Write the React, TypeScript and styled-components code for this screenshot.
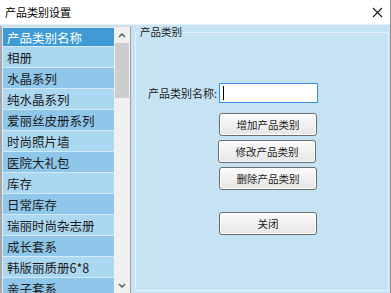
import React from "react";
import styled, { createGlobalStyle } from "styled-components";

const GlobalStyle = createGlobalStyle`
  html, body {
    margin: 0;
    padding: 0;
    background: #c6e3f4;
    font-family: "Noto Sans CJK SC", "Liberation Sans", sans-serif;
  }
`;

const Window = styled.div`
  width: 391px;
  height: 293px;
  display: flex;
  flex-direction: column;
  background: #c6e3f4;
  overflow: hidden;
  border-right: 1px solid #8d8d8d;
  box-sizing: border-box;
`;

const TitleBar = styled.div`
  height: 24px;
  flex: none;
  background: #ffffff;
  display: flex;
  align-items: center;
  justify-content: space-between;
  padding: 0 7px 0 5px;
  font-size: 11px;
  color: #000;
`;

const Body = styled.div`
  flex: 1;
  display: flex;
  min-height: 0;
  border-top: 1px solid #e6f3fb;
`;

const ListFrame = styled.div`
  width: 128px;
  flex: none;
  margin-top: 1px;
  display: flex;
  border-left: 2px solid #a9a9a9;
  border-top: 1px solid #d9d9d9;
  border-right: 1px solid #a0a0a0;
  background: #f0f0f0;
  overflow: hidden;
`;

const Rows = styled.div`
  flex: 1;
  display: flex;
  flex-direction: column;
  padding: 1px 0 0 1px;
  background: #d7ecf8;
`;

const Row = styled.div<{ $kind: "head" | "odd" | "even" }>`
  height: ${(p) => (p.$kind === "head" ? "18px" : "20px")};
  flex: none;
  display: flex;
  align-items: center;
  padding-left: 4px;
  font-size: 12.5px;
  white-space: nowrap;
  border-bottom: 1px solid #d2e9f7;
  color: ${(p) => (p.$kind === "head" ? "#ffffff" : "#1a1a1a")};
  background: ${(p) =>
    p.$kind === "head" ? "#3f9bd5" : p.$kind === "odd" ? "#acd7f1" : "#8fc7ea"};
`;

const ScrollBar = styled.div`
  width: 16px;
  flex: none;
  display: flex;
  flex-direction: column;
  align-items: center;
  background: #f0f0f0;
`;

const Arrow = styled.div`
  height: 16px;
  display: flex;
  align-items: center;
  justify-content: center;
`;

const Thumb = styled.div`
  width: 14px;
  height: 55px;
  background: #cdcdcd;
`;

const Track = styled.div`
  flex: 1;
`;

const Panel = styled.div`
  flex: 1;
  padding: 1px 1px 2px 4px;
  display: flex;
`;

const GroupBox = styled.fieldset`
  flex: 1;
  margin: 0;
  padding: 0;
  border: 1px solid #e3f1fb;
  border-radius: 2px;
  display: flex;
  flex-direction: column;
  align-items: flex-start;
`;

const Legend = styled.legend`
  font-size: 10.5px;
  color: #1a1a1a;
  padding: 0 1px;
  margin-left: 3px;
  line-height: 12px;
`;

const FieldRow = styled.div`
  display: flex;
  align-items: center;
  margin: 45px 0 0 12px;
  gap: 2px;
`;

const Label = styled.span`
  font-size: 11px;
  color: #1a1a1a;
`;

const Input = styled.div`
  width: 94px;
  height: 18px;
  background: #ffffff;
  border: 1px solid #3c8fd9;
  display: flex;
  align-items: center;
  padding-left: 3px;
  box-sizing: content-box;
`;

const Caret = styled.div`
  width: 1px;
  height: 14px;
  background: #000;
`;

const Buttons = styled.div`
  display: flex;
  flex-direction: column;
  margin: 10px 0 0 83px;
`;

const Button = styled.button<{ $gap?: number; $shift?: number }>`
  width: 98px;
  height: 23px;
  margin-top: ${(p) => p.$gap ?? 0}px;
  margin-left: ${(p) => p.$shift ?? 0}px;
  border: 1px solid #6c6c6c;
  border-radius: 3px;
  background: linear-gradient(#fbfbfb, #e6e6e6);
  font-family: "Noto Sans CJK SC", "Liberation Sans", sans-serif;
  font-size: 10.5px;
  color: #1a1a1a;
  padding: 0;
  box-shadow: inset 0 0 0 1px #ffffff;
`;

const items = [
  "相册",
  "水晶系列",
  "纯水晶系列",
  "爱丽丝皮册系列",
  "时尚照片墙",
  "医院大礼包",
  "库存",
  "日常库存",
  "瑞丽时尚杂志册",
  "成长套系",
  "韩版丽质册6*8",
  "亲子套系",
];

export default function App() {
  return (
    <>
      <GlobalStyle />
      <Window>
        <TitleBar>
          <span>产品类别设置</span>
          <svg width="11" height="11" viewBox="0 0 11 11">
            <path d="M1 1L10 10M10 1L1 10" stroke="#1a1a1a" strokeWidth="1.1" />
          </svg>
        </TitleBar>
        <Body>
          <ListFrame>
            <Rows>
              <Row $kind="head">产品类别名称</Row>
              {items.map((t, i) => (
                <Row key={t} $kind={i % 2 === 0 ? "odd" : "even"}>
                  {t}
                </Row>
              ))}
            </Rows>
            <ScrollBar>
              <Arrow>
                <svg width="8" height="5" viewBox="0 0 8 5">
                  <path d="M1 4L4 1L7 4" stroke="#606060" strokeWidth="1.5" fill="none" />
                </svg>
              </Arrow>
              <Thumb />
              <Track />
              <Arrow>
                <svg width="8" height="5" viewBox="0 0 8 5">
                  <path d="M1 1L4 4L7 1" stroke="#606060" strokeWidth="1.5" fill="none" />
                </svg>
              </Arrow>
            </ScrollBar>
          </ListFrame>
          <Panel>
            <GroupBox>
              <Legend>产品类别</Legend>
              <FieldRow>
                <Label>产品类别名称:</Label>
                <Input>
                  <Caret />
                </Input>
              </FieldRow>
              <Buttons>
                <Button>增加产品类别</Button>
                <Button $gap={4} $shift={-1}>修改产品类别</Button>
                <Button $gap={4}>删除产品类别</Button>
                <Button $gap={22}>关闭</Button>
              </Buttons>
            </GroupBox>
          </Panel>
        </Body>
      </Window>
    </>
  );
}
